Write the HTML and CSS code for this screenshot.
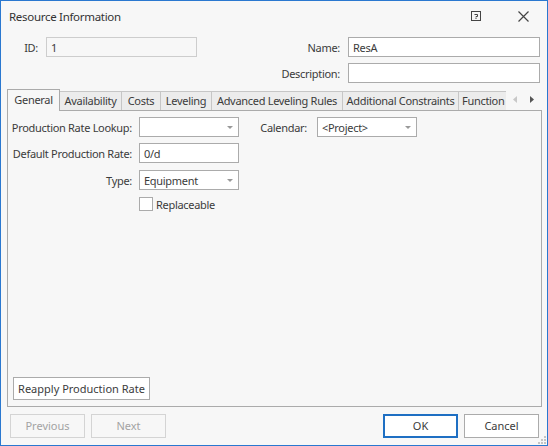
FILE: index.html
```html
<!DOCTYPE html>
<html lang="en">
<head>
  <meta charset="UTF-8" />
  <title>Resource Information</title>
  <link rel="stylesheet" href="styles.css">
</head>
<body>
  <div class="dialog">
    <!-- Title bar -->
    <div class="titlebar">
      <span class="title">Resource Information</span>
      <svg class="help-icon" width="10" height="10" viewBox="0 0 10 10">
        <rect x="0.5" y="0.5" width="9" height="9" fill="none" stroke="#444"/>
        <path d="M3.5 3.5 H6.5 V5.5 H5 V6.5" fill="none" stroke="#444"/>
        <rect x="4.5" y="7" width="1" height="1" fill="#444"/>
      </svg>
      <svg class="close-icon" width="11" height="11" viewBox="0 0 11 11">
        <path d="M0.5 0.5 L10.5 10.5 M10.5 0.5 L0.5 10.5" stroke="#444" stroke-width="1.2"/>
      </svg>
    </div>

    <!-- Header fields -->
    <div class="header">
      <span class="lbl">ID:</span>
      <div class="box disabled">1</div>
      <span class="lbl">Name:</span>
      <div class="box">ResA</div>
      <span></span>
      <span></span>
      <span class="lbl">Description:</span>
      <div class="box"></div>
    </div>

    <!-- Tabs -->
    <div class="tabs">
      <div class="tab active t-general">General</div>
      <div class="tab t-avail">Availability</div>
      <div class="tab t-costs">Costs</div>
      <div class="tab t-level">Leveling</div>
      <div class="tab t-adv">Advanced Leveling Rules</div>
      <div class="tab t-add">Additional Constraints</div>
      <div class="tab t-func">Function</div>
      <div class="tab-arrows">
        <svg width="4" height="7" viewBox="0 0 4 7"><polygon points="4,0 4,7 0,3.5" fill="#c8c8c8"/></svg>
        <svg width="4" height="7" viewBox="0 0 4 7"><polygon points="0,0 0,7 4,3.5" fill="#555"/></svg>
      </div>
    </div>

    <!-- General tab page -->
    <div class="panel">
      <div class="row">
        <span class="row-lbl">Production Rate Lookup:</span>
        <div class="box combo"><span></span><i class="arrow"></i></div>
        <span class="cal-lbl">Calendar:</span>
        <div class="box combo"><span>&lt;Project&gt;</span><i class="arrow"></i></div>
      </div>
      <div class="row row2">
        <span class="row-lbl">Default Production Rate:</span>
        <div class="box">0/d</div>
      </div>
      <div class="row row3">
        <span class="row-lbl">Type:</span>
        <div class="box combo"><span>Equipment</span><i class="arrow"></i></div>
      </div>
      <div class="row row4">
        <span class="row-lbl"></span>
        <span class="check"></span>
        <span class="check-text">Replaceable</span>
      </div>
      <div class="spacer"></div>
      <button class="btn reapply">Reapply Production Rate</button>
    </div>

    <!-- Footer buttons -->
    <div class="footer">
      <button class="btn off">Previous</button>
      <button class="btn off">Next</button>
      <span class="spacer"></span>
      <button class="btn ok">OK</button>
      <button class="btn">Cancel</button>
    </div>

    <svg class="grip" width="8" height="8" viewBox="0 0 8 8">
      <rect x="6" y="0" width="2" height="2" fill="#c4c4c4"/>
      <rect x="3" y="3" width="2" height="2" fill="#c4c4c4"/>
      <rect x="6" y="3" width="2" height="2" fill="#c4c4c4"/>
      <rect x="0" y="6" width="2" height="2" fill="#c4c4c4"/>
      <rect x="3" y="6" width="2" height="2" fill="#c4c4c4"/>
      <rect x="6" y="6" width="2" height="2" fill="#c4c4c4"/>
    </svg>
  </div>
</body>
</html>
```
FILE: styles.css
```css
body {
  margin: 0;
  font-family: "Noto Sans", "Liberation Sans", sans-serif;
  font-size: 11px;
  letter-spacing: -0.3px;
  color: #3b3b3b;
}
.dialog {
  position: relative;
  width: 548px;
  height: 446px;
  box-sizing: border-box;
  border: 1px solid #2a78d0;
  background: #f7f7f7;
  display: flex;
  flex-direction: column;
  white-space: nowrap;
}
/* Title bar */
.titlebar {
  height: 30px;
  padding: 0 18px 0 8px;
  display: flex;
  align-items: center;
  flex-shrink: 0;
}
.title {
  color: #333;
  font-size: 11.5px;
}
.help-icon {
  margin-left: auto;
  margin-right: 37px;
}
/* Header */
.header {
  display: grid;
  grid-template-columns: 37px 151px 1fr 192px;
  grid-auto-rows: 20px;
  column-gap: 8px;
  row-gap: 6px;
  padding: 6px 7px 0 0;
}
.lbl {
  text-align: right;
  align-self: center;
}
.box {
  box-sizing: border-box;
  height: 20px;
  border: 1px solid #ababab;
  background: #fff;
  padding: 0 4px;
  display: flex;
  align-items: center;
}
.box.disabled {
  border-color: #cdcdcd;
  background: #f7f7f7;
}
/* Tabs */
.tabs {
  display: flex;
  align-items: flex-end;
  height: 21px;
  margin: 6px 0 0 6px;
}
.tab {
  box-sizing: border-box;
  height: 19px;
  border: 1px solid #c6c6c6;
  border-bottom: none;
  margin-left: -1px;
  background: #ececec;
  text-align: center;
  line-height: 18px;
  overflow: hidden;
}
.tab.active {
  position: relative;
  z-index: 1;
  height: 22px;
  margin: 0 0 -1px 0;
  border-color: #ababab;
  background: #f7f7f7;
  line-height: 20px;
}
.t-general { width: 53px; }
.t-avail { width: 63px; }
.t-costs { width: 40px; }
.t-level { width: 52px; }
.t-adv { width: 132px; }
.t-add { width: 117px; }
.t-func {
  width: 48px;
  border-right: none;
  text-align: left;
  padding-left: 3px;
}
.tab-arrows {
  display: flex;
  gap: 13px;
  height: 21px;
  align-items: center;
  margin-left: 7px;
}
/* Tab page */
.panel {
  flex: 1;
  margin: 0 5px 0 6px;
  border: 1px solid #ababab;
  padding: 6px 0 6px 0;
  display: flex;
  flex-direction: column;
}
.row {
  display: flex;
  align-items: center;
  height: 20px;
}
.row2 { margin-top: 6px; }
.row3 { margin-top: 7px; }
.row4 { margin-top: 7px; height: 14px; }
.row-lbl {
  width: 124px;
  margin-right: 7px;
  text-align: right;
  flex-shrink: 0;
}
.row .box {
  width: 100px;
}
.combo {
  justify-content: space-between;
  padding-right: 5px;
}
.arrow {
  width: 0;
  height: 0;
  border-left: 3px solid transparent;
  border-right: 3px solid transparent;
  border-top: 3px solid #999;
}
.cal-lbl {
  width: 61px;
  margin: 0 10px 0 7px;
  text-align: right;
}
.check {
  box-sizing: border-box;
  width: 14px;
  height: 14px;
  border: 1px solid #ababab;
  background: #fff;
}
.check-text {
  margin-left: 3px;
}
.spacer {
  flex: 1;
}
/* Buttons */
.btn {
  box-sizing: border-box;
  height: 23px;
  border: 1px solid #ababab;
  background: #fff;
  font: inherit;
  color: #3b3b3b;
  padding: 0 0 1px;
}
.reapply {
  align-self: flex-start;
  width: 137px;
  margin-left: 5px;
}
.footer {
  height: 38px;
  flex-shrink: 0;
  display: flex;
  gap: 6px;
  padding: 7px 8px 0 9px;
  box-sizing: border-box;
}
.footer .btn {
  width: 75px;
  height: 24px;
  padding-bottom: 2px;
}
.btn.off {
  border-color: #d4d4d4;
  background: #f7f7f7;
  color: #a3a3a3;
}
.btn.ok {
  border: 2px solid #1e6fc3;
}
.grip {
  position: absolute;
  right: 1px;
  bottom: 1px;
}
```
